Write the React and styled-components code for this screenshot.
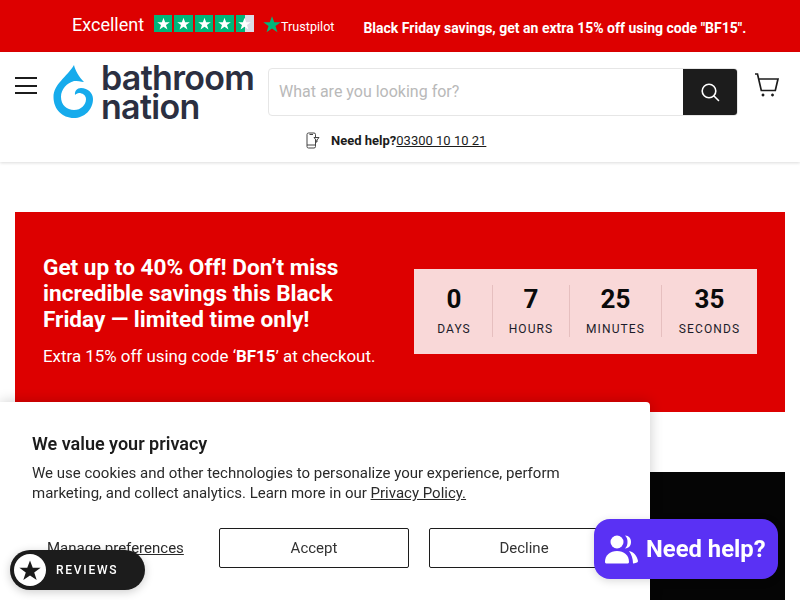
import React from "react";
import styled, { createGlobalStyle } from "styled-components";

const GlobalStyle = createGlobalStyle`
  html, body {
    margin: 0;
    padding: 0;
    background: #fff;
    overflow: hidden;
    height: 100%;
  }
  * {
    box-sizing: border-box;
  }
  body {
    font-family: Roboto, "Liberation Sans", sans-serif;
    color: #1c1c1c;
  }
`;

const TopBar = styled.div`
  height: 52px;
  background: #dd0000;
  color: #fff;
  display: flex;
  align-items: center;
  padding-left: 72px;
`;

const Excellent = styled.span`
  font-size: 18px;
  line-height: 1;
  margin-top: -3px;
  margin-right: 10px;
`;

const StarRow = styled.div`
  display: flex;
  gap: 2px;
  margin-top: -5px;
  margin-right: 9px;
`;

const StarBox = styled.div`
  width: 18.4px;
  height: 17px;
  background: ${props => props.half ? "linear-gradient(90deg, #00b67a 50%, #dcdce6 50%)" : "#00b67a"};
  display: flex;
  align-items: center;
  justify-content: center;
`;

const PilotMark = styled.div`
  line-height: 0;
  margin-top: -5px;
`;

const PilotWord = styled.span`
  font-size: 12.6px;
  margin-left: 0;
  margin-top: 1px;
  margin-right: 29px;
`;

const Promo = styled.span`
  font-size: 14px;
  font-weight: 700;
  margin-top: 3px;
`;

const Header = styled.header`
  height: 110px;
  background: #fff;
  box-shadow: 0 1px 3px rgba(0, 0, 0, 0.14);
  padding: 12px 15px 0;
  position: relative;
`;

const HeaderRow = styled.div`
  display: flex;
  align-items: flex-start;
`;

const Burger = styled.div`
  width: 22px;
  margin-top: 13px;
  margin-right: 16px;
  display: flex;
  flex-direction: column;
  gap: 5.5px;
`;

const BurgerLine = styled.span`
  display: block;
  height: 2px;
  background: #1c1c1c;
`;

const Logo = styled.div`
  display: flex;
  width: 215px;
  flex: none;
`;

const LogoWords = styled.div`
  margin-left: 6px;
  color: #2b2f41;
  font-family: Inter, "Open Sans", sans-serif;
  font-weight: 600;
  font-size: 34px;
  line-height: 29px;
  letter-spacing: -0.7px;
  margin-top: -1px;
`;

const SearchBox = styled.div`
  width: 470px;
  height: 48px;
  flex: none;
  margin-top: 4px;
  display: flex;
  border: 1px solid #e6e6e6;
  border-radius: 4px;
  overflow: hidden;
`;

const SearchText = styled.div`
  flex: 1;
  padding-left: 10px;
  font-size: 16px;
  line-height: 46px;
  color: #b9b9b9;
`;

const SearchButton = styled.div`
  width: 54px;
  background: #1c1c1c;
  display: flex;
  align-items: center;
  justify-content: center;
`;

const CartLink = styled.div`
  margin-left: 16px;
  margin-top: 8px;
  line-height: 0;
`;

const HelpRow = styled.div`
  display: flex;
  align-items: center;
  font-size: 13px;
  margin-top: 11px;
  padding-left: 291px;
`;

const HelpLabel = styled.strong`
  font-weight: 700;
  margin-left: 11px;
`;

const HelpPhone = styled.span`
  text-decoration: underline;
`;

const Hero = styled.section`
  margin: 50px 15px 0;
  height: 200px;
  background: #dd0000;
  color: #fff;
  display: flex;
  align-items: center;
  justify-content: space-between;
  padding: 0 28px 2px;
`;

const HeroCopy = styled.div`
  width: 345px;
`;

const HeroTitle = styled.h2`
  margin: 0;
  font-size: 22.6px;
  line-height: 26px;
  font-weight: 700;
`;

const HeroNote = styled.p`
  margin: 12px 0 0;
  font-size: 16.9px;
  line-height: 22px;
`;

const Countdown = styled.div`
  width: 343px;
  height: 85px;
  background: #f9d8d8;
  display: flex;
  align-items: center;
`;

const TimeCell = styled.div`
  height: 52px;
  width: ${props => props.w}px;
  padding-left: ${props => props.first ? "2px" : "0"};
  border-left: ${props => props.first ? "none" : "1px solid #e6bfbf"};
  display: flex;
  flex-direction: column;
  align-items: center;
`;

const TimeValue = styled.span`
  font-size: 26px;
  line-height: 28px;
  font-weight: 700;
  color: #0a0a0a;
`;

const TimeLabel = styled.span`
  font-size: 12px;
  line-height: 14px;
  margin-top: 9px;
  letter-spacing: 1.1px;
  color: #1c1c2a;
`;

const LowerRow = styled.div`
  margin: 60px 15px 0;
  display: flex;
  justify-content: flex-end;
`;

const BlackPanel = styled.div`
  width: 135px;
  height: 128px;
  background: #050505;
`;

const CookieCard = styled.div`
  position: fixed;
  left: 0;
  top: 402px;
  width: 650px;
  height: 198px;
  background: #fff;
  border-radius: 0 4px 0 0;
  box-shadow: 0 0 14px rgba(0, 0, 0, 0.2);
  padding: 32px 32px 0;
`;

const CookieTitle = styled.h3`
  margin: 0;
  font-size: 18px;
  line-height: 20px;
  font-weight: 600;
  color: #1c1c1c;
`;

const CookieText = styled.p`
  margin: 9px 0 0;
  font-size: 15px;
  line-height: 20px;
  color: #2a2a2a;
`;

const CookieLink = styled.span`
  text-decoration: underline;
`;

const CookieActions = styled.div`
  display: flex;
  align-items: center;
  margin-top: 25px;
`;

const ManageLink = styled.span`
  width: 187px;
  flex: none;
  padding-left: 15px;
  font-size: 15px;
  text-decoration: underline;
  color: #2a2a2a;
`;

const CookieButton = styled.div`
  width: 190px;
  height: 40px;
  flex: none;
  margin-right: 20px;
  border: 1px solid #1c1c1c;
  border-radius: 2px;
  display: flex;
  align-items: center;
  justify-content: center;
  font-size: 15px;
  color: #333;
`;

const ReviewsPill = styled.div`
  position: fixed;
  left: 10px;
  top: 550px;
  width: 135px;
  height: 40px;
  border-radius: 20px;
  background: #1c1c1c;
  box-shadow: 0 2px 10px rgba(0, 0, 0, 0.2);
  display: flex;
  align-items: center;
  padding-left: 4px;
`;

const ReviewsBadge = styled.div`
  width: 32px;
  height: 32px;
  border-radius: 50%;
  background: #fff;
  display: flex;
  align-items: center;
  justify-content: center;
`;

const ReviewsLabel = styled.span`
  margin-left: 10px;
  color: #fff;
  font-size: 12px;
  font-weight: 500;
  letter-spacing: 1.75px;
`;

const ChatButton = styled.div`
  position: fixed;
  left: 594px;
  top: 519px;
  width: 184px;
  height: 60px;
  border-radius: 16px;
  background: #5a31f4;
  color: #fff;
  display: flex;
  align-items: center;
  padding-left: 10px;
  box-shadow: 0 2px 8px rgba(0, 0, 0, 0.15);
`;

const ChatLabel = styled.span`
  margin-left: 8px;
  font-size: 23.8px;
  font-weight: 700;
`;

const Star = ({ size = 13, color = "#fff" }) => (
  <svg width={size} height={size} viewBox="0 0 24 24">
    <path
      fill={color}
      d="M12 1.5l3 8h8.6l-7 5.2 2.7 8.3-7.3-5.1L4.700 23l2.700-8.300-7-5.200H9z"
    />
  </svg>
);

const DropMark = () => (
  <svg width="42" height="55" viewBox="0 0 42 55">
    <path
      fill="#16abec"
      d="M21 1C22 6 26 13 31 18C28 17.500 24 17 21 17C14 19 8 25 8 33C8 41 14 46 21 46C28 46 33 41 33 35C33 31 29 29 26 29C24.500 29 23 30 22 31C21.500 27 24 24 28 24C35 24 40 29 40 35C40 46 31 54 21 54C9 54 0.500 45 0.500 33C0.500 20 14 13 21 1Z"
    />
  </svg>
);

const PhoneIcon = () => (
  <svg width="14" height="17" viewBox="0 0 14 17" fill="none" stroke="#444" strokeWidth="1">
    <rect x="1" y="1" width="8.500" height="15" rx="1.500" />
    <path d="M1 13h8.500M3.500 2.500h3.500" />
    <path d="M8 5.500h5l-2 2.500v2H10V8z" fill="#fff" />
  </svg>
);

const timeCells = [
  { value: "0", label: "DAYS", w: 78, first: true },
  { value: "7", label: "HOURS", w: 77 },
  { value: "25", label: "MINUTES", w: 92 },
  { value: "35", label: "SECONDS", w: 96 },
];

const App = () => (
  <>
    <GlobalStyle />
    <TopBar>
      <Excellent>Excellent</Excellent>
      <StarRow>
        <StarBox><Star /></StarBox>
        <StarBox><Star /></StarBox>
        <StarBox><Star /></StarBox>
        <StarBox><Star /></StarBox>
        <StarBox half><Star /></StarBox>
      </StarRow>
      <PilotMark>
        <Star size={18} color="#00b67a" />
      </PilotMark>
      <PilotWord>Trustpilot</PilotWord>
      <Promo>Black Friday savings, get an extra 15% off using code "BF15".</Promo>
    </TopBar>
    <Header>
      <HeaderRow>
        <Burger>
          <BurgerLine />
          <BurgerLine />
          <BurgerLine />
        </Burger>
        <Logo>
          <DropMark />
          <LogoWords>
            bathroom
            <br />
            nation
          </LogoWords>
        </Logo>
        <SearchBox>
          <SearchText>What are you looking for?</SearchText>
          <SearchButton>
            <svg width="20" height="20" viewBox="0 0 20 20" fill="none" stroke="#fff" strokeWidth="1.600">
              <circle cx="9" cy="9" r="6.800" />
              <path d="M14 14l4.500 4.500" strokeLinecap="round" />
            </svg>
          </SearchButton>
        </SearchBox>
        <CartLink>
          <svg width="25" height="25" viewBox="0 0 25 25" fill="none" stroke="#1c1c1c" strokeWidth="1.700">
            <path d="M1 2h2.500l3.800 16.500h14L24 7H5" />
            <circle cx="9" cy="23" r="1.200" fill="#1c1c1c" strokeWidth="0.500" />
            <circle cx="18.500" cy="23" r="1.200" fill="#1c1c1c" strokeWidth="0.500" />
          </svg>
        </CartLink>
      </HeaderRow>
      <HelpRow>
        <PhoneIcon />
        <HelpLabel>Need help?</HelpLabel>
        <HelpPhone>03300 10 10 21</HelpPhone>
      </HelpRow>
    </Header>
    <Hero>
      <HeroCopy>
        <HeroTitle>Get up to 40% Off! Don’t miss incredible savings this Black Friday — limited time only!</HeroTitle>
        <HeroNote>Extra 15% off using code ‘<b>BF15</b>’ at checkout.</HeroNote>
      </HeroCopy>
      <Countdown>
        {timeCells.map(cell => (
          <TimeCell key={cell.label} w={cell.w} first={cell.first}>
            <TimeValue>{cell.value}</TimeValue>
            <TimeLabel>{cell.label}</TimeLabel>
          </TimeCell>
        ))}
      </Countdown>
    </Hero>
    <LowerRow>
      <BlackPanel />
    </LowerRow>
    <CookieCard>
      <CookieTitle>We value your privacy</CookieTitle>
      <CookieText>
        We use cookies and other technologies to personalize your experience, perform
        <br />
        marketing, and collect analytics. Learn more in our <CookieLink>Privacy Policy.</CookieLink>
      </CookieText>
      <CookieActions>
        <ManageLink>Manage preferences</ManageLink>
        <CookieButton>Accept</CookieButton>
        <CookieButton>Decline</CookieButton>
      </CookieActions>
    </CookieCard>
    <ReviewsPill>
      <ReviewsBadge>
        <Star size={22} color="#1c1c1c" />
      </ReviewsBadge>
      <ReviewsLabel>REVIEWS</ReviewsLabel>
    </ReviewsPill>
    <ChatButton>
      <svg width="34" height="30" viewBox="0 0 34 30" fill="#fff">
        <circle cx="13" cy="8" r="6.500" />
        <path d="M1 28c0-7 5-11 12-11s12 4 12 11c0 1-1 1.500-2 1.500H3c-1 0-2-.5-2-1.500z" />
        <path d="M21 1.500c4 0 6 3 6 6.500s-2 6-6 6.500c2-2 2.500-4 2.500-6.500s-.5-4.500-2.500-6.500z" />
        <path d="M25 17c5 1 8 5 9 10 .2 1.500-2.500 2.500-5 2.500 0-5-1.500-9-4-12.500z" />
      </svg>
      <ChatLabel>Need help?</ChatLabel>
    </ChatButton>
  </>
);

export default App;
